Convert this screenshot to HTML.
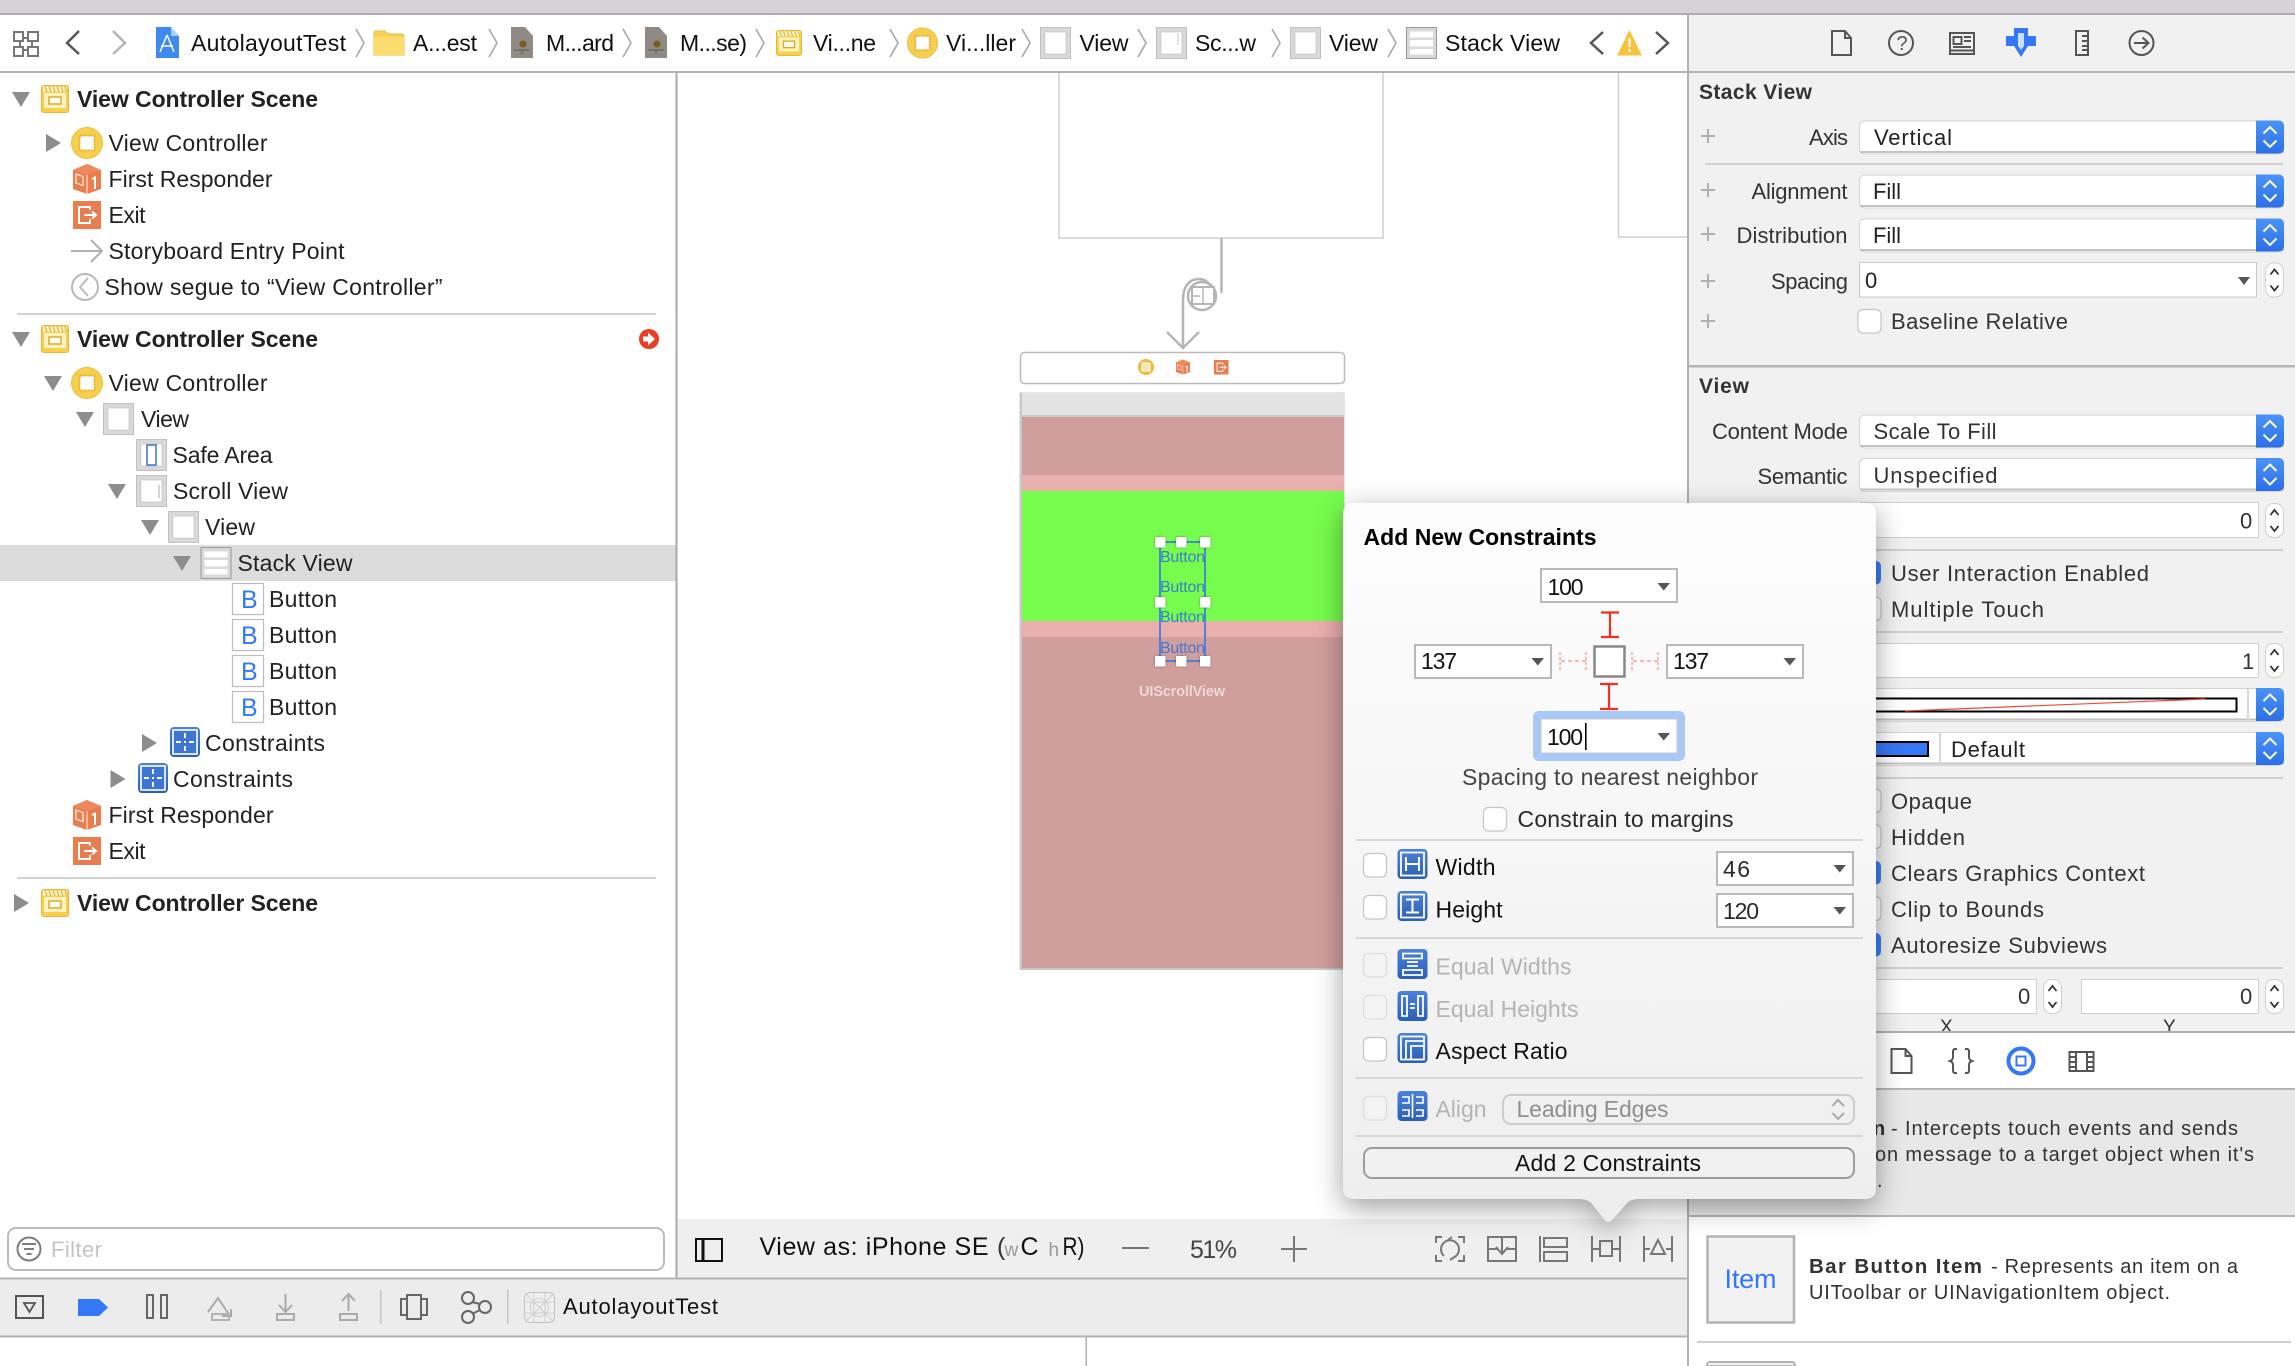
<!DOCTYPE html>
<html lang="en">
<head>
<meta charset="utf-8">
<title>AutolayoutTest</title>
<style>
html,body{margin:0;padding:0;background:#fff;width:2295px;height:1366px;overflow:hidden}
svg{display:block;font-family:"Liberation Sans",sans-serif}
.n{font-size:23px;fill:#222}
.j{font-size:23px;fill:#111}
.s{font-size:23px;font-weight:bold;fill:#222}
.i{font-size:22px;fill:#333}
.v{font-size:22px;fill:#222}
.h{font-size:21px;font-weight:bold;fill:#333}
.d{font-size:20px;fill:#333}
.k{font-size:23px;fill:#111}
.g{font-size:23px;fill:#b4b4b4}
.f{font-size:23px;fill:#2a2a2a}
.b{font-size:25px;fill:#3478f6}
.c{font-size:25px;fill:#222}
.btn{font-size:16px;fill:#3672dc;fill-opacity:.9}
</style>
</head>
<body>
<svg width="2295" height="1366" viewBox="0 0 2295 1366" xmlns="http://www.w3.org/2000/svg">
<defs>
<linearGradient id="pg" x1="0" y1="0" x2="0" y2="1"><stop offset="0" stop-color="#fdfdfd"/><stop offset="1" stop-color="#eeeeee"/></linearGradient>
<linearGradient id="bl" x1="0" y1="0" x2="0" y2="1"><stop offset="0" stop-color="#4a94f8"/><stop offset="1" stop-color="#2c6fe8"/></linearGradient>
<linearGradient id="cg" x1="0" y1="0" x2="0" y2="1"><stop offset="0" stop-color="#4b82dc"/><stop offset="1" stop-color="#2b5fb4"/></linearGradient>
<filter id="sh" x="-20%" y="-20%" width="140%" height="140%"><feDropShadow dx="0" dy="8" stdDeviation="14" flood-color="#000" flood-opacity=".38"/></filter>
<filter id="hs" x="-50%" y="-50%" width="200%" height="200%"><feDropShadow dx="0" dy="0" stdDeviation="1.2" flood-color="#000" flood-opacity=".35"/></filter>

<symbol id="scene" viewBox="0 0 28 28">
 <rect x=".5" y=".5" width="27" height="27" rx="2.5" fill="#f7cf4f" stroke="#e4b73a"/>
 <rect x="2" y="1.5" width="24" height="5" fill="#fff6d5"/>
 <path d="M4 1.5l2 5M8 1.5l2 5M12 1.5l2 5M16 1.5l2 5M20 1.5l2 5M24 1.5l1.5 5" stroke="#e4b73a" stroke-width="1.4"/>
 <rect x="3" y="8" width="22" height="15" fill="#fff3bd"/>
 <rect x="8" y="12" width="12" height="7" fill="#fffbe8" stroke="#d9a52d" stroke-width="1.4"/>
</symbol>
<symbol id="vc" viewBox="0 0 32 32">
 <circle cx="16" cy="16" r="15.5" fill="#f7cf4f" stroke="#eebf3d"/>
 <rect x="7" y="7" width="18" height="18" rx="2" fill="#f0c64a"/>
 <rect x="9" y="9" width="14" height="14" fill="#fff" stroke="#dda82c" stroke-dasharray="1.5 1.2"/>
</symbol>
<symbol id="cube" viewBox="0 0 28 30">
 <path d="M14 0L28 6V25L14 30L0 25V6Z" fill="#ea7d4e"/>
 <path d="M14 0L28 6L14 11L0 6Z" fill="#ec8a5e"/>
 <path d="M14 11V30" stroke="#fbd9c8" stroke-width="1.2"/>
 <path d="M3 10l7 2.5v9l-7-2.5z" fill="none" stroke="#fbe3d7" stroke-width="1.4"/>
 <path d="M19 15l3-1.5V25" fill="none" stroke="#fff" stroke-width="2"/>
</symbol>
<symbol id="exit" viewBox="0 0 28 28">
 <rect width="28" height="28" fill="#ea7d4e"/>
 <path d="M17 9V6H6V22H17V18" fill="none" stroke="#fff" stroke-width="2"/>
 <path d="M11 14H23M19 10.5L23 14L19 17.500" fill="none" stroke="#fff" stroke-width="2"/>
</symbol>
<symbol id="view" viewBox="0 0 31 32">
 <rect x=".5" y=".5" width="30" height="31" fill="#d9d9d9" stroke="#c0c0c0"/>
 <rect x="5" y="5" width="21" height="22" fill="#fff" stroke="#bdbdbd" stroke-width=".6"/>
</symbol>
<symbol id="stack" viewBox="0 0 31 32">
 <rect x=".5" y=".5" width="30" height="31" fill="#d9d9d9" stroke="#999"/>
 <rect x="4" y="4.500" width="23" height="6" fill="#fff"/>
 <rect x="4" y="13" width="23" height="6.500" fill="#fff"/>
 <rect x="4" y="22" width="23" height="5.500" fill="#fff"/>
</symbol>
<symbol id="cons" viewBox="0 0 30 30">
 <rect width="30" height="30" rx="4" fill="url(#cg)"/>
 <rect x="3" y="3" width="24" height="24" fill="#3f75d2" stroke="#fff" stroke-width="1.600"/>
 <path d="M15 6v5M15 14v2M15 19v5M6 15h5M14 15h2M19 15h5" stroke="#fff" stroke-width="2"/>
</symbol>
<symbol id="cb" viewBox="0 0 30 30"><rect width="30" height="30" rx="4" fill="url(#cg)"/></symbol>

<g id="popup">
 <rect x="1859.500" y=".5" width="424" height="33" rx="5" fill="#fff" stroke="#d4d4d4"/>
 <path d="M1860 31.500H2284" stroke="#c2c2c2" stroke-width="2"/>
 <path d="M2256 0H2279a5 5 0 0 1 5 5V28a5 5 0 0 1-5 5H2256Z" fill="url(#bl)"/>
 <path d="M2263.500 13L2270 6.500L2276.500 13M2263.500 20L2270 26.500L2276.500 20" fill="none" stroke="#fff" stroke-width="2"/>
</g>
<g id="step">
 <rect x="2265.500" y=".5" width="18" height="34" rx="8" fill="#fff" stroke="#cfcfcf"/>
 <path d="M2270.500 12L2274.500 7L2278.500 12M2270.500 23L2274.500 28L2278.500 23" fill="none" stroke="#333" stroke-width="1.800"/>
</g>
<g id="stepx">
 <rect x="2043.500" y=".5" width="18" height="34" rx="8" fill="#fff" stroke="#cfcfcf"/>
 <path d="M2048.500 12L2052.500 7L2056.500 12M2048.500 23L2052.500 28L2056.500 23" fill="none" stroke="#333" stroke-width="1.800"/>
</g>
<path id="td" d="M0 0H18L9 15Z" fill="#8d8d8d"/>
<path id="tr" d="M0 0L15 9L0 18Z" fill="#8d8d8d"/>
<path id="sep" d="M0 0L8 14L0 28" fill="none" stroke="#a8a8a8" stroke-width="1.600"/>
<path id="plus" d="M-7 0H7M0-7V7" stroke="#b0b0b0" stroke-width="2" fill="none"/>
<g id="drop"><rect x="1" y="1" width="136" height="33" fill="#fff" stroke="#b9b9b9" stroke-width="2"/></g>
<path id="arr" d="M0 0H12.500L6.250 7.500Z" fill="#555"/>
<rect id="chk" x="0" y="0" width="23" height="23.500" rx="5" fill="#fff" stroke="#c6c6c6" stroke-width="1.200"/>
<rect id="chkg" x="0" y="0" width="23" height="23.500" rx="5" fill="#f3f3f3" stroke="#dddddd" stroke-width="1.200"/>
</defs>

<!-- base -->
<rect width="2295" height="1366" fill="#fff"/>
<rect width="2295" height="14" fill="#d5d3d6"/>
<rect y="13" width="2295" height="2" fill="#adadad"/>
<rect y="71" width="2295" height="2" fill="#b3b3b3"/>

<!-- inspector bg -->
<rect x="1688" y="15" width="607" height="1017" fill="#f1f1f1"/>
<rect x="1688" y="1090" width="607" height="125" fill="#e8e8e8"/>
<rect x="1688" y="71" width="607" height="2" fill="#b3b3b3"/>
<rect x="1688" y="365" width="607" height="2.500" fill="#b5b5b5"/>
<rect x="1688" y="1088" width="607" height="2" fill="#b5b5b5"/>
<rect x="1688" y="1215" width="607" height="2" fill="#b5b5b5"/>

<!-- canvas bottom bar -->
<rect x="677" y="1219" width="1011" height="59" fill="#efefef"/>
<rect y="1279" width="1688" height="57" fill="#ececec"/>
<rect y="1277.500" width="1688" height="2" fill="#b3b3b3"/>
<rect y="1335.500" width="1688" height="2" fill="#b3b3b3"/>
<rect x="675.500" y="73" width="2" height="1205" fill="#a9a9a9"/>
<rect x="1687" y="15" width="2" height="1351" fill="#b0b0b0"/>
<rect x="1085.500" y="1337" width="1.500" height="29" fill="#b0b0b0"/>

<!-- jump bar -->
<g fill="none" stroke="#777" stroke-width="2">
 <path d="M14 32h9v9h-9zM28 32h10v9H28zM14 47h9v9h-9zM28 47h10v9H28zM23 38h5M20 41v6M32 41v6M23 50h5"/>
</g>
<path d="M79 31L67 43L79 54" fill="none" stroke="#555" stroke-width="2.500"/>
<path d="M113 31L125 43L113 54" fill="none" stroke="#b5b5b5" stroke-width="2.500"/>
<path d="M156 27H171L179 36V58H156Z" fill="#3d8bf0"/>
<path d="M171 27V36H179Z" fill="#a9cef7"/>
<path d="M167 35L160 52M167 35L174 52M161 46H173" fill="none" stroke="#fff" stroke-width="1.500"/>
<text class="j" x="191" y="51" textLength="155">AutolayoutTest</text>
<use href="#sep" x="356" y="29"/>
<path d="M374 33a2 2 0 0 1 2-2h9l3 3h14a2 2 0 0 1 2 2v19h-30Z" fill="#f7d15a" stroke="#e8bd3f"/>
<rect x="374" y="37" width="30" height="18" fill="#fbdc6f"/>
<text class="j" x="413" y="51" textLength="64">A...est</text>
<use href="#sep" x="489" y="29"/>
<path d="M511 27H525L533 36V58H511Z" fill="#8f8a84"/><circle cx="523" cy="44" r="3.500" fill="#7a5d1e"/><path d="M514 50h16M522 50v4" stroke="#6b6b6b" stroke-width="1.500"/>
<text class="j" x="546" y="51" textLength="68">M...ard</text>
<use href="#sep" x="623" y="29"/>
<path d="M645 27H659L667 36V58H645Z" fill="#8f8a84"/><circle cx="657" cy="44" r="3.500" fill="#7a5d1e"/><path d="M648 50h16M656 50v4" stroke="#6b6b6b" stroke-width="1.500"/>
<text class="j" x="680" y="51" textLength="67">M...se)</text>
<use href="#sep" x="756" y="29"/>
<use href="#scene" x="776" y="29" width="26" height="28"/>
<text class="j" x="813" y="51" textLength="63">Vi...ne</text>
<use href="#sep" x="890" y="29"/>
<use href="#vc" x="907" y="27.500" width="31" height="31"/>
<text class="j" x="946" y="51" textLength="70">Vi...ller</text>
<use href="#sep" x="1022" y="29"/>
<use href="#view" x="1040" y="27" width="31" height="32"/>
<text class="j" x="1079.500" y="51" textLength="49">View</text>
<use href="#sep" x="1138" y="29"/>
<use href="#view" x="1156" y="27" width="31" height="32"/><path d="M1178 33v12" stroke="#c8c8c8"/>
<text class="j" x="1195" y="51" textLength="61">Sc...w</text>
<use href="#sep" x="1272" y="29"/>
<use href="#view" x="1290" y="27" width="31" height="32"/>
<text class="j" x="1329" y="51" textLength="49">View</text>
<use href="#sep" x="1388" y="29"/>
<use href="#stack" x="1406" y="27" width="31" height="32"/>
<text class="j" x="1445" y="51" textLength="115">Stack View</text>
<path d="M1603 32L1591 43L1603 54" fill="none" stroke="#555" stroke-width="2.500"/>
<path d="M1629.500 31L1641 55H1618Z" fill="#f8c33c" stroke="#f8c33c" stroke-linejoin="round"/>
<path d="M1629.500 38v9M1629.500 49v3" stroke="#fff" stroke-width="2.200"/>
<path d="M1656 32L1668 43L1656 54" fill="none" stroke="#555" stroke-width="2.500"/>

<!-- navigator -->
<use href="#td" x="12" y="92"/><use href="#scene" x="41" y="85" width="28" height="28"/>
<text class="s" x="77" y="107" textLength="241">View Controller Scene</text>
<use href="#tr" x="46" y="134"/><use href="#vc" x="71" y="127" width="32" height="32"/>
<text class="n" x="108.500" y="151" textLength="159">View Controller</text>
<use href="#cube" x="73" y="164" width="28" height="30"/>
<text class="n" x="108.500" y="187" textLength="164">First Responder</text>
<use href="#exit" x="73" y="201" width="28" height="28"/>
<text class="n" x="108.500" y="223" textLength="37">Exit</text>
<path d="M71 251H102M91 240L102 251L91 262" fill="none" stroke="#b0b0b0" stroke-width="2"/>
<text class="n" x="108.500" y="259" textLength="236">Storyboard Entry Point</text>
<circle cx="85" cy="287" r="13" fill="#fff" stroke="#b8b8b8" stroke-width="2"/><path d="M88 278L80 287L88 296" fill="none" stroke="#b8b8b8" stroke-width="1.800"/>
<text class="n" x="104.500" y="295" textLength="338">Show segue to “View Controller”</text>
<rect x="17" y="313" width="639" height="2" fill="#d2d2d2"/>

<use href="#td" x="12" y="332"/><use href="#scene" x="41" y="325" width="28" height="28"/>
<text class="s" x="77" y="347" textLength="241">View Controller Scene</text>
<circle cx="649" cy="339" r="10" fill="#ee3b24"/><path d="M643 336.500h5v-4l7 6.500l-7 6.500v-4h-5z" fill="#fff"/>
<use href="#td" x="44" y="376"/><use href="#vc" x="71" y="367" width="32" height="32"/>
<text class="n" x="108.500" y="391" textLength="159">View Controller</text>
<use href="#td" x="76" y="412"/><use href="#view" x="103" y="403" width="31" height="32"/>
<text class="n" x="141" y="427" textLength="48">View</text>
<use href="#view" x="136" y="439" width="31" height="32"/><rect x="147" y="445" width="9" height="20" fill="#fff" stroke="#3f74c4" stroke-width="1.500"/>
<text class="n" x="172.500" y="463" textLength="100">Safe Area</text>
<use href="#td" x="108" y="484"/><use href="#view" x="136" y="475" width="31" height="32"/><path d="M159 485v13" stroke="#c6c6c6" stroke-width="1.500"/>
<text class="n" x="173" y="499" textLength="115">Scroll View</text>
<use href="#td" x="141" y="520"/><use href="#view" x="168" y="511" width="31" height="32"/>
<text class="n" x="205" y="535" textLength="50">View</text>
<rect y="545" width="675.500" height="36" fill="#dcdcdc"/>
<use href="#td" x="173" y="556"/><use href="#stack" x="200" y="547" width="32" height="32"/>
<text class="n" x="237.500" y="571" textLength="115">Stack View</text>

<g>
<rect x="232.500" y="583.500" width="31" height="31" fill="#fff" stroke="#bdbdbd" stroke-width="1.200"/>
<text class="b" x="241" y="608" textLength="14">B</text>
<text class="n" x="269" y="607" textLength="68">Button</text>
<rect x="232.500" y="619.500" width="31" height="31" fill="#fff" stroke="#bdbdbd" stroke-width="1.200"/>
<text class="b" x="241" y="644" textLength="14">B</text>
<text class="n" x="269" y="643" textLength="68">Button</text>
<rect x="232.500" y="655.500" width="31" height="31" fill="#fff" stroke="#bdbdbd" stroke-width="1.200"/>
<text class="b" x="241" y="680" textLength="14">B</text>
<text class="n" x="269" y="679" textLength="68">Button</text>
<rect x="232.500" y="691.500" width="31" height="31" fill="#fff" stroke="#bdbdbd" stroke-width="1.200"/>
<text class="b" x="241" y="716" textLength="14">B</text>
<text class="n" x="269" y="715" textLength="68">Button</text>
</g>
<use href="#tr" x="142" y="734"/><use href="#cons" x="170" y="727" width="30" height="30"/>
<text class="n" x="205" y="751" textLength="120">Constraints</text>
<use href="#tr" x="110.500" y="770"/><use href="#cons" x="138" y="763" width="30" height="30"/>
<text class="n" x="173" y="787" textLength="120">Constraints</text>
<use href="#cube" x="73" y="800" width="28" height="30"/>
<text class="n" x="108.500" y="823" textLength="165">First Responder</text>
<use href="#exit" x="73" y="837" width="28" height="28"/>
<text class="n" x="108.500" y="859" textLength="37">Exit</text>
<rect x="17" y="877" width="639" height="2" fill="#d2d2d2"/>
<use href="#tr" x="14" y="894"/><use href="#scene" x="41" y="889" width="28" height="28"/>
<text class="s" x="77" y="911" textLength="241">View Controller Scene</text>

<rect x="8" y="1228" width="656" height="42" rx="8" fill="#fff" stroke="#bcbcbc" stroke-width="2"/>
<circle cx="29" cy="1249" r="11.500" fill="#fff" stroke="#7c7c7c" stroke-width="2"/>
<path d="M22 1244h14M24 1249h10M26.500 1254h5" stroke="#7c7c7c" stroke-width="2"/>
<text x="51" y="1257" font-size="22" fill="#c4c4c4" textLength="51">Filter</text>

<!-- canvas frames -->
<path d="M1059 73V238H1383V73" fill="#fff" stroke="#cfcfcf" stroke-width="1.500"/>
<path d="M1618.500 73V237H1687" fill="#fff" stroke="#cfcfcf" stroke-width="1.500"/>
<g fill="none" stroke="#b5b5b5" stroke-width="2.500">
 <path d="M1221.500 238V293"/>
 <path d="M1183 348V300C1183 288 1188 279 1199 279C1206 279 1208 283 1210 285"/>
 <circle cx="1202" cy="296" r="14"/>
 <path d="M1167 332L1183 348L1199 332"/>
</g>
<rect x="1192" y="287" width="22" height="17" fill="#fff" stroke="#b5b5b5" stroke-width="2"/><path d="M1203 287v17M1192 296h8" stroke="#b5b5b5" stroke-width="1.500"/>
<rect x="1020.500" y="352.500" width="324" height="31" rx="4" fill="#fff" stroke="#bbb" stroke-width="1.500"/>
<circle cx="1146" cy="367" r="8" fill="#efba3d"/><rect x="1142" y="363" width="8" height="8" fill="#fbe9a8" stroke="#fff"/>
<use href="#cube" x="1175.500" y="359.500" width="15" height="15"/>
<use href="#exit" x="1214" y="360" width="14.500" height="14.500"/>

<rect x="1020" y="393" width="324" height="576" fill="#fff" stroke="#cccccc" stroke-width="1"/>
<rect x="1021" y="394" width="323" height="22" fill="#e3e3e3"/>
<rect x="1021" y="415" width="323" height="2" fill="#c9c9c9"/>
<rect x="1021" y="417" width="323" height="552" fill="#d09e9c"/>
<rect x="1021" y="475" width="323" height="16" fill="#e8afae"/>
<rect x="1021" y="491" width="323" height="130" fill="#76fc4c"/>
<rect x="1021" y="621" width="323" height="16" fill="#e8afae"/>
<rect x="1020" y="393" width="2" height="576" fill="#c8c8c8"/>
<rect x="1020" y="968" width="324" height="2" fill="#c8c8c8"/>
<text class="btn" x="1160" y="562" textLength="45">Button</text>
<text class="btn" x="1160" y="592" textLength="45">Button</text>
<text class="btn" x="1160" y="622" textLength="45">Button</text>
<text class="btn" x="1160" y="653" textLength="45">Button</text>
<rect x="1160" y="542" width="45" height="119" fill="none" stroke="#3f78e0" stroke-opacity=".85" stroke-width="2"/>
<g fill="#fff" filter="url(#hs)">
 <rect x="1155" y="537" width="10.500" height="10.500"/><rect x="1176" y="537" width="10.500" height="10.500"/><rect x="1200" y="537" width="10.500" height="10.500"/>
 <rect x="1155" y="597" width="10.500" height="10.500"/><rect x="1200" y="597" width="10.500" height="10.500"/>
 <rect x="1155" y="656" width="10.500" height="10.500"/><rect x="1176" y="656" width="10.500" height="10.500"/><rect x="1200" y="656" width="10.500" height="10.500"/>
</g>
<text x="1139" y="696" font-size="14.500" font-weight="bold" fill="#ead9d8" textLength="86">UIScrollView</text>

<!-- canvas bottom -->
<rect x="696" y="1239" width="26" height="22" fill="none" stroke="#111" stroke-width="2"/><path d="M703 1240v20" stroke="#111" stroke-width="3"/>
<text class="c" x="759.500" y="1255" textLength="229" style="fill:#111">View as: iPhone SE</text>
<text class="c" x="997" y="1255" style="fill:#333">(</text>
<text x="1004.500" y="1256" font-size="19" fill="#999">w</text>
<text class="c" x="1020.500" y="1255" style="fill:#111">C</text>
<text x="1048.500" y="1256" font-size="19" fill="#999">h</text>
<text class="c" x="1062.500" y="1255" style="fill:#111" textLength="22" lengthAdjust="spacingAndGlyphs">R)</text>
<path d="M1122 1248H1149" stroke="#777" stroke-width="2"/>
<text class="c" x="1190" y="1258" textLength="47" style="fill:#444">51%</text>
<path d="M1281 1249H1307M1294 1236V1262" stroke="#777" stroke-width="2"/>
<g fill="none" stroke="#777" stroke-width="2">
 <path d="M1436 1243v-6h6M1458 1237h6v6M1464 1255v6h-6M1442 1261h-6v-6"/>
 <path d="M1444 1256a9 9 0 1 1 12 0M1456 1256l-6 4M1448 1240l4-3"/>
 <path d="M1488 1237h28v24h-28zM1488 1249h9M1507 1249h9M1502 1238v15M1496 1247l6 7l6-7"/>
 <path d="M1540 1236v26M1544 1238h23v9h-23zM1544 1252h23v9h-23z"/>
 <path d="M1592 1236v26M1620 1236v26M1592 1249h8M1612 1249h8M1600 1241h12v15h-12z"/>
 <path d="M1644 1236v26M1672 1236v26M1644 1249h6M1666 1249h6M1658 1240l-7 14h14z"/>
</g>

<!-- debug bar -->
<rect x="16" y="1296" width="27" height="22" fill="none" stroke="#555" stroke-width="2"/><path d="M24 1303h11l-5.500 9z" fill="none" stroke="#555" stroke-width="1.800"/>
<path d="M78 1299H99L108 1307.500L99 1316H78Z" fill="#3478f6"/>
<path d="M147 1295h6v23h-6zM161 1295h6v23h-6z" fill="none" stroke="#666" stroke-width="2"/>
<g fill="none" stroke="#aaa" stroke-width="2">
 <path d="M208 1312L218 1298L230 1316M222 1316h9v-7"/><rect x="212" y="1314" width="17" height="6" stroke="#b3b3b3"/>
 <path d="M285.500 1294v17M279 1305l6.500 7l6.500-7"/><rect x="277" y="1314" width="17" height="6"/>
 <path d="M348.500 1311v-17M342 1301l6.500-7l6.500 7"/><rect x="340" y="1314" width="17" height="6"/>
</g>
<rect x="380" y="1290" width="1.500" height="34" fill="#c4c4c4"/>
<g fill="none" stroke="#666" stroke-width="2">
 <rect x="407" y="1295" width="14" height="24"/><path d="M407 1299h-6v16h6M421 1299h6v16h-6"/>
 <circle cx="468" cy="1298" r="6"/><circle cx="468" cy="1317" r="6"/><circle cx="485" cy="1307" r="6"/><path d="M472 1302l8 2M472 1314l8-4"/>
</g>
<rect x="507" y="1290" width="1.500" height="34" fill="#c4c4c4"/>
<rect x="524.500" y="1292.500" width="30" height="30" rx="6" fill="#efefef" stroke="#c2c2c2"/>
<path d="M524 1302h31M524 1313h31M534 1292v31M545 1292v31M525 1293l29 29M554 1293l-29 29" stroke="#cfcfcf" fill="none"/><circle cx="539.500" cy="1307.500" r="9" fill="none" stroke="#cfcfcf"/>
<text class="j" x="563" y="1314" textLength="155" style="font-size:22px">AutolayoutTest</text>

<!-- inspector icons -->
<g fill="none" stroke="#555" stroke-width="2">
 <path d="M1832 31h13l6 7v17h-19zM1845 31v7h6"/>
 <circle cx="1901" cy="43" r="12"/>
 <rect x="1950" y="33" width="24" height="21"/><rect x="1953.500" y="37" width="8" height="7"/><path d="M1964 37h7M1964 41h7M1953 47h18M1950 50.500h24"/>
 <rect x="2076" y="31" width="12" height="24"/><path d="M2082 36h6M2082 41h6M2082 46h6M2082 50h6"/>
 <circle cx="2141.500" cy="43" r="12"/><path d="M2134 43h14M2142.500 37.500L2148.500 43L2142.500 48.500"/>
</g>
<text x="1896.500" y="50" font-size="20" fill="#555">?</text>
<path d="M2014 28H2028V36H2036V46H2028L2021 57L2014 46H2006V36H2014Z" fill="#3478f6"/><path d="M2018 33h6v13l-3 4l-3-4z" fill="#fff" fill-opacity=".75"/>

<!-- inspector stack view -->
<text class="h" x="1699" y="99" textLength="113">Stack View</text>
<use href="#plus" x="1708" y="136"/>
<text class="i" x="1809" y="145" textLength="39">Axis</text>
<use href="#popup" y="120.500"/>
<text class="v" x="1874" y="145" textLength="78">Vertical</text>
<rect x="1705" y="163" width="578" height="2" fill="#d0d0d0"/>
<use href="#plus" x="1708" y="190"/>
<text class="i" x="1751.500" y="199" textLength="96">Alignment</text>
<use href="#popup" y="174.500"/>
<text class="v" x="1873" y="199" textLength="28">Fill</text>
<use href="#plus" x="1708" y="234"/>
<text class="i" x="1736.500" y="243" textLength="111">Distribution</text>
<use href="#popup" y="218.500"/>
<text class="v" x="1873" y="243" textLength="28">Fill</text>
<use href="#plus" x="1708" y="281"/>
<text class="i" x="1771" y="289" textLength="77">Spacing</text>
<rect x="1859.500" y="262.500" width="397" height="34.500" fill="#fff" stroke="#c9c9c9"/>
<text class="v" x="1865" y="288">0</text>
<path d="M2238 277H2250L2244 285Z" fill="#555"/>
<use href="#step" y="262.500"/>
<use href="#plus" x="1708" y="321"/>
<use href="#chk" x="1858" y="309.500"/>
<text class="v" x="1891" y="329" textLength="177" style="fill:#333">Baseline Relative</text>

<text class="h" x="1699" y="393" textLength="50">View</text>
<text class="i" x="1712" y="439" textLength="136">Content Mode</text>
<use href="#popup" y="414.500"/>
<text class="v" x="1873.500" y="439" textLength="123" style="fill:#333">Scale To Fill</text>
<text class="i" x="1757.500" y="484" textLength="90">Semantic</text>
<use href="#popup" y="458"/>
<text class="v" x="1873.500" y="483" textLength="124" style="fill:#333">Unspecified</text>
<rect x="1860.500" y="502.500" width="398" height="35" fill="#fff" stroke="#cfcfcf"/>
<text class="v" x="2240" y="528.500" style="fill:#333">0</text>
<use href="#step" y="503"/>
<rect x="1705" y="549" width="578" height="2" fill="#d0d0d0"/>
<rect x="1858" y="561" width="23" height="23.500" rx="5" fill="#3a80f2"/>
<text class="v" x="1891" y="581" textLength="258" style="fill:#333">User Interaction Enabled</text>
<use href="#chk" x="1858" y="597"/>
<text class="v" x="1891" y="617" textLength="153" style="fill:#333">Multiple Touch</text>
<rect x="1705" y="631" width="578" height="2" fill="#d0d0d0"/>
<rect x="1860.500" y="643.500" width="398" height="34" fill="#fff" stroke="#cfcfcf"/>
<text class="v" x="2242" y="669" style="fill:#333">1</text>
<use href="#step" y="643"/>
<use href="#popup" y="688"/>
<path d="M2248 689v32" stroke="#d8d8d8" stroke-width="2"/>
<rect x="1850" y="698.500" width="386.500" height="13" fill="#fff" stroke="#000" stroke-width="2"/>
<path d="M1905 711L2205 699" stroke="#ee4a38" stroke-width="1.200"/>
<use href="#popup" y="732"/>
<rect x="1850" y="742" width="78" height="14" fill="#3478f6" stroke="#000" stroke-width="2"/>
<path d="M1940 733v32" stroke="#d8d8d8" stroke-width="2"/>
<text class="v" x="1951" y="757" textLength="74">Default</text>
<rect x="1705" y="777" width="578" height="2" fill="#d0d0d0"/>
<use href="#chk" x="1858" y="789"/>
<text class="v" x="1891" y="809" textLength="81" style="fill:#333">Opaque</text>
<use href="#chk" x="1858" y="825"/>
<text class="v" x="1891" y="845" textLength="74" style="fill:#333">Hidden</text>
<rect x="1858" y="861" width="23" height="23.500" rx="5" fill="#3a80f2"/>
<text class="v" x="1891" y="881" textLength="254" style="fill:#333">Clears Graphics Context</text>
<use href="#chk" x="1858" y="897"/>
<text class="v" x="1891" y="917" textLength="153" style="fill:#333">Clip to Bounds</text>
<rect x="1858" y="933" width="23" height="23.500" rx="5" fill="#3a80f2"/>
<text class="v" x="1891" y="953" textLength="216" style="fill:#333">Autoresize Subviews</text>
<rect x="1705" y="967" width="578" height="2" fill="#d0d0d0"/>
<rect x="1860.500" y="979.500" width="176" height="34" fill="#fff" stroke="#cfcfcf"/>
<text class="v" x="2018" y="1004" style="fill:#333">0</text>
<use href="#stepx" y="979"/>
<rect x="2081.500" y="979.500" width="177" height="34" fill="#fff" stroke="#cfcfcf"/>
<text class="v" x="2240" y="1004" style="fill:#333">0</text>
<use href="#step" y="979"/>
<text x="1940" y="1033" font-size="19" fill="#333">X</text>
<text x="2163" y="1033" font-size="19" fill="#333">Y</text>
<rect x="1688" y="1033" width="607" height="55" fill="#fff"/>
<rect x="1688" y="1031" width="607" height="2" fill="#b0b0b0"/>

<!-- library tabs -->
<g fill="none" stroke="#555" stroke-width="2">
 <path d="M1891.500 1049h14l6 7v17h-20zM1905.500 1049v7h6"/>
 <path d="M1957 1049h-2q-2 0-2 3v5q0 3-3 4q3 1 3 4v5q0 3 2 3h2M1965 1049h2q2 0 2 3v5q0 3 3 4q-3 1-3 4v5q0 3-2 3h-2"/>
 <rect x="2069.500" y="1052" width="24" height="19"/><path d="M2076 1052v19M2087 1052v19M2070 1057h6M2070 1062h6M2070 1067h6M2087 1057h6M2087 1062h6M2087 1067h6"/>
</g>
<circle cx="2021" cy="1061" r="12.500" fill="#fff" stroke="#3478f6" stroke-width="4"/><rect x="2016.500" y="1056.500" width="9" height="9" fill="none" stroke="#3478f6" stroke-width="2"/>

<!-- description -->
<text x="1873" y="1135" font-size="20" font-weight="bold" fill="#333">n</text>
<text class="d" x="1891" y="1135" textLength="347">- Intercepts touch events and sends</text>
<text class="d" x="1875" y="1161" textLength="379">on message to a target object when it's</text>
<text class="d" x="1877" y="1187">.</text>
<rect x="1707.500" y="1236.500" width="86.500" height="86" fill="#f2f2f2" stroke="#b4b4b4" stroke-width="2.500"/>
<text x="1724.500" y="1288" font-size="27" fill="#3478f6" textLength="52">Item</text>
<text x="1809" y="1273" font-size="20.500" font-weight="bold" fill="#333" textLength="173">Bar Button Item</text>
<text class="d" x="1991" y="1273" textLength="247">- Represents an item on a</text>
<text class="d" x="1809" y="1299" textLength="361">UIToolbar or UINavigationItem object.</text>
<rect x="1697" y="1341" width="594" height="2" fill="#cfcfcf"/>
<path d="M1707 1366V1365a3 3 0 0 1 3-3H1792a3 3 0 0 1 3 3V1366Z" fill="#f2f2f2" stroke="#b4b4b4" stroke-width="2"/>

<!-- popover -->
<path d="M1353 503H1866a10 10 0 0 1 10 10V1189a10 10 0 0 1-10 10H1637q-7 0-12 6L1612 1220q-3.500 3.500-7 0L1593 1205q-5-6-12-6H1353a10 10 0 0 1-10-10V513a10 10 0 0 1 10-10Z" fill="url(#pg)" filter="url(#sh)"/>
<text x="1363.500" y="545" font-size="23" font-weight="bold" fill="#000" textLength="233">Add New Constraints</text>
<use href="#drop" x="1540" y="568"/>
<text class="k" x="1547.500" y="595" textLength="36">100</text>
<use href="#arr" x="1657.500" y="583"/>
<path d="M1601 612.500H1619M1610 612.500V637M1601 637H1619" fill="none" stroke="#ee3124" stroke-width="2.200"/>
<use href="#drop" x="1414" y="644"/>
<text class="k" x="1421" y="669" textLength="36">137</text>
<use href="#arr" x="1531.500" y="658"/>
<path d="M1560 652V670M1586 652V670" stroke="#f4b6b2" stroke-width="1.800" stroke-dasharray="3 2"/>
<path d="M1561 661H1586" stroke="#f4b6b2" stroke-width="2" stroke-dasharray="4 3"/>
<rect x="1594.500" y="646.500" width="30" height="30" fill="#fff" stroke="#888" stroke-width="2.500"/>
<path d="M1632 652V670M1658 652V670" stroke="#f4b6b2" stroke-width="1.800" stroke-dasharray="3 2"/>
<path d="M1633 661H1658" stroke="#f4b6b2" stroke-width="2" stroke-dasharray="4 3"/>
<use href="#drop" x="1666" y="644"/>
<text class="k" x="1673" y="669" textLength="36">137</text>
<use href="#arr" x="1783.500" y="658"/>
<path d="M1600 684H1618M1609 684V709M1600 709H1618" fill="none" stroke="#ee3124" stroke-width="2.200"/>
<rect x="1533" y="711" width="152" height="50" rx="6" fill="#a8c9f5"/>
<rect x="1541" y="719" width="136" height="34" fill="#fff" stroke="#c8c8c8"/>
<text class="k" x="1547" y="745" textLength="36">100</text>
<rect x="1585" y="723" width="1.600" height="27" fill="#000"/>
<use href="#arr" x="1657.500" y="733"/>
<text x="1462" y="785" font-size="23" fill="#444" textLength="296">Spacing to nearest neighbor</text>
<use href="#chk" x="1483.500" y="807.500"/>
<text class="f" x="1517.500" y="827" textLength="216">Constrain to margins</text>
<rect x="1355.500" y="839" width="507.500" height="2" fill="#d8d8d8"/>

<use href="#chk" x="1363.500" y="853.500"/>
<use href="#cb" x="1397.500" y="849" width="30" height="30"/>
<rect x="1401" y="852.500" width="23" height="23" fill="none" stroke="#fff" stroke-width="1.800"/><path d="M1406 857v14M1419 857v14M1406 864h13" fill="none" stroke="#fff" stroke-width="2"/>
<text class="k" x="1435.500" y="875" textLength="60">Width</text>
<use href="#drop" x="1716" y="851"/>
<text class="f" x="1723" y="877" textLength="27">46</text>
<use href="#arr" x="1833.500" y="865"/>

<use href="#chk" x="1363.500" y="895.500"/>
<use href="#cb" x="1397.500" y="891" width="30" height="30"/>
<rect x="1401" y="894.500" width="23" height="23" fill="none" stroke="#fff" stroke-width="1.800"/><path d="M1406 899.500h13M1406 912.500h13M1412.500 899.500v13" fill="none" stroke="#fff" stroke-width="2"/>
<text class="k" x="1435.500" y="917.500" textLength="67">Height</text>
<use href="#drop" x="1716" y="893"/>
<text class="f" x="1723" y="919" textLength="36">120</text>
<use href="#arr" x="1833.500" y="907"/>
<rect x="1355.500" y="937" width="507.500" height="2" fill="#d8d8d8"/>

<use href="#chkg" x="1363.500" y="953.500"/>
<use href="#cb" x="1397.500" y="949" width="30" height="30"/>
<path d="M1403 953.500h19v5h-19zM1403 970h19v5h-19zM1407 962h11M1407 966h11" fill="none" stroke="#fff" stroke-width="1.800"/>
<text class="g" x="1435.500" y="974.500" textLength="136">Equal Widths</text>

<use href="#chkg" x="1363.500" y="995.500"/>
<use href="#cb" x="1397.500" y="991" width="30" height="30"/>
<path d="M1402 996h5v20h-5zM1418 996h5v20h-5zM1410 1004h5M1410 1008h5" fill="none" stroke="#fff" stroke-width="1.800"/>
<text class="g" x="1435.500" y="1017" textLength="143">Equal Heights</text>

<use href="#chk" x="1363.500" y="1037.500"/>
<use href="#cb" x="1397.500" y="1033" width="30" height="30"/>
<rect x="1401" y="1036.500" width="23" height="23" fill="none" stroke="#fff" stroke-width="1.800"/><path d="M1406 1059v-18h17M1411 1059v-13h12" fill="none" stroke="#fff" stroke-width="1.800"/>
<text class="k" x="1435.500" y="1059" textLength="132">Aspect Ratio</text>
<rect x="1355.500" y="1077" width="507.500" height="2" fill="#d8d8d8"/>

<use href="#chkg" x="1363.500" y="1096.500"/>
<use href="#cb" x="1397.500" y="1091" width="30" height="30"/>
<path d="M1412.500 1094v24M1402 1097h7v6h-7M1416 1097h7v6h-7M1402 1110h7v6h-7M1416 1110h7v6h-7" fill="none" stroke="#fff" stroke-width="1.600"/>
<text class="g" x="1435.500" y="1117" textLength="51">Align</text>
<rect x="1503" y="1095" width="351" height="29" rx="8" fill="none" stroke="#cccccc" stroke-width="2"/>
<text x="1516.500" y="1117" font-size="23" fill="#8f8f8f" textLength="152">Leading Edges</text>
<path d="M1832.500 1106L1838 1100L1844 1106M1832.500 1113L1838 1119L1844 1113" fill="none" stroke="#aaa" stroke-width="2"/>
<rect x="1355.500" y="1135" width="507.500" height="2" fill="#d8d8d8"/>
<rect x="1364" y="1148" width="490" height="30" rx="8" fill="#f1f1f1" stroke="#9c9c9c" stroke-width="2"/>
<text class="k" x="1515" y="1171" textLength="186">Add 2 Constraints</text>
</svg>
</body>
</html>
